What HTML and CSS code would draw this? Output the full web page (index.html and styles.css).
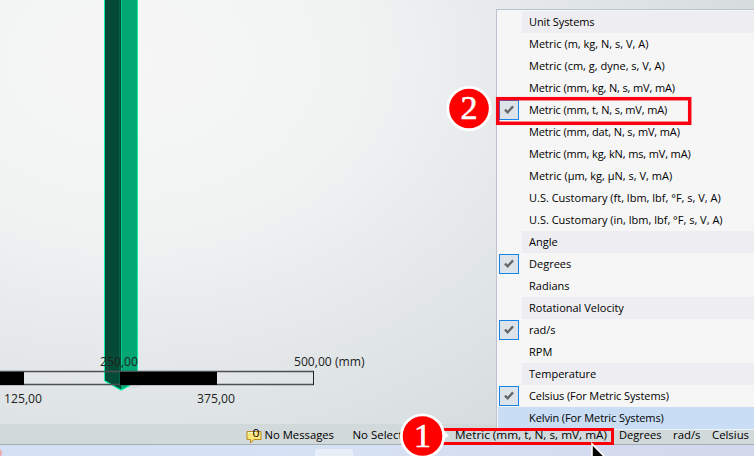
FILE: index.html
```html
<!DOCTYPE html>
<html lang="en">
<head>
<meta charset="utf-8">
<title>Unit selection</title>
<link rel="stylesheet" href="styles.css">
</head>
<body>
<div class="app">
  <main class="viewport">
    <svg class="scene" width="754" height="424" viewBox="0 0 754 424">
      <path d="M105 0H121V390L105 381Z" fill="#044b35"/>
      <path d="M121 0H137V382L121 390Z" fill="#02a672"/>
      <path d="M119.5 0V389" stroke="#066043" stroke-width="1"/>
      <path d="M121.5 0V372" stroke="#04c98c" stroke-width="1"/>
      <path d="M104.5 0V381M137.5 0V372" fill="none" stroke="#14f0aa" stroke-width="1"/>
      <path d="M105 381L121 390L130 385.5" fill="none" stroke="#00f5a6" stroke-width="1.2"/>
      <path d="M131 385H139V388H127Z" fill="#dae0e2"/>
      <path d="M0 371.5H314M0 384.5H314" stroke="#4b5152" stroke-width="1.4"/>
      <path d="M313.5 371V385" stroke="#222" stroke-width="1"/>
      <path d="M0 372H24V385H0ZM120 372H217V385H120Z" fill="#000"/>
      <g class="scale-text">
        <text x="100" y="366" textLength="38" lengthAdjust="spacingAndGlyphs">250,00</text>
        <text x="294" y="366" textLength="70.5" lengthAdjust="spacingAndGlyphs">500,00 (mm)</text>
        <text x="4" y="403" textLength="38" lengthAdjust="spacingAndGlyphs">125,00</text>
        <text x="197" y="403" textLength="38" lengthAdjust="spacingAndGlyphs">375,00</text>
      </g>
    </svg>
  </main>
  <footer class="status">
    <svg width="754" height="20" viewBox="0 0 754 20">
      <path d="M247 7.5H261V15.5H254L250.5 19V15.5H247Z" fill="#ffe779" stroke="#b38a27"/>
      <path d="M248 8.5H256" stroke="#fffbd0"/>
      <g class="status-text">
        <text x="252.5" y="13" textLength="7" lengthAdjust="spacingAndGlyphs">0</text>
        <text x="264.5" y="15" textLength="69.5" lengthAdjust="spacingAndGlyphs">No Messages</text>
        <text x="352.5" y="15" textLength="50" lengthAdjust="spacingAndGlyphs">No Select</text>
        <text x="455" y="15" textLength="152" lengthAdjust="spacingAndGlyphs">Metric (mm, t, N, s, mV, mA)</text>
        <text x="619" y="15" textLength="42.5" lengthAdjust="spacingAndGlyphs">Degrees</text>
        <text x="673" y="15" textLength="27.5" lengthAdjust="spacingAndGlyphs">rad/s</text>
        <text x="712" y="15" textLength="37" lengthAdjust="spacingAndGlyphs">Celsius</text>
      </g>
    </svg>
  </footer>
  <div class="taskbar"><span class="task"></span></div>
</div>

<div class="menu">
  <div class="row heading"><span class="tick"></span><span class="label snug">Unit Systems</span></div>
  <div class="row"><span class="tick"></span><span class="label">Metric (m, kg, N, s, V, A)</span></div>
  <div class="row"><span class="tick"></span><span class="label">Metric (cm, g, dyne, s, V, A)</span></div>
  <div class="row"><span class="tick"></span><span class="label tight">Metric (mm, kg, N, s, mV, mA)</span></div>
  <div class="row"><span class="tick"><svg class="check" viewBox="0 0 20 20"><path d="M5.5 9.5L8.5 12.5L14.5 6"/></svg></span><span class="label tight">Metric (mm, t, N, s, mV, mA)</span></div>
  <div class="row"><span class="tick"></span><span class="label tight">Metric (mm, dat, N, s, mV, mA)</span></div>
  <div class="row"><span class="tick"></span><span class="label tight">Metric (mm, kg, kN, ms, mV, mA)</span></div>
  <div class="row"><span class="tick"></span><span class="label">Metric (µm, kg, µN, s, V, mA)</span></div>
  <div class="row"><span class="tick"></span><span class="label">U.S. Customary (ft, lbm, lbf, °F, s, V, A)</span></div>
  <div class="row"><span class="tick"></span><span class="label">U.S. Customary (in, lbm, lbf, °F, s, V, A)</span></div>
  <div class="row heading"><span class="tick"></span><span class="label">Angle</span></div>
  <div class="row"><span class="tick"><svg class="check" viewBox="0 0 20 20"><path d="M5.5 9.5L8.5 12.5L14.5 6"/></svg></span><span class="label">Degrees</span></div>
  <div class="row"><span class="tick"></span><span class="label">Radians</span></div>
  <div class="row heading"><span class="tick"></span><span class="label">Rotational Velocity</span></div>
  <div class="row"><span class="tick"><svg class="check" viewBox="0 0 20 20"><path d="M5.5 9.5L8.5 12.5L14.5 6"/></svg></span><span class="label">rad/s</span></div>
  <div class="row"><span class="tick"></span><span class="label">RPM</span></div>
  <div class="row heading"><span class="tick"></span><span class="label">Temperature</span></div>
  <div class="row"><span class="tick"><svg class="check" viewBox="0 0 20 20"><path d="M5.5 9.5L8.5 12.5L14.5 6"/></svg></span><span class="label snug">Celsius (For Metric Systems)</span></div>
  <div class="row hover"><span class="tick"></span><span class="label snug">Kelvin (For Metric Systems)</span></div>
</div>

<svg class="callouts" width="754" height="456" viewBox="0 0 754 456">
  <rect x="497.7" y="98.7" width="192" height="24.6" fill="none" stroke="#fb0012" stroke-width="3.5"/>
  <rect x="430" y="429.5" width="182.5" height="14" fill="none" stroke="#fb0009" stroke-width="3"/>
  <path d="M443 430L449 436L443 439Z" fill="#fff"/>
  <circle cx="469" cy="108.5" r="21.2" fill="#fe0000" stroke="#fff" stroke-width="2.8"/>
  <circle cx="422.5" cy="436" r="21.2" fill="#fe0000" stroke="#fff" stroke-width="2.8"/>
  <g class="number"><text x="469" y="119">2</text><text x="422.5" y="447">1</text></g>
  <path d="M592 444V466L609 461Z" fill="#000" stroke="#fff" stroke-width="1.6"/>
  <circle cx="-3" cy="453" r="5" fill="#eba9b0"/>
</svg>
</body>
</html>
```
FILE: styles.css
```css
body {
  margin: 0;
  width: 754px;
  height: 456px;
  overflow: hidden;
  position: relative;
  font-family: "Open Sans", "Noto Sans", sans-serif;
}
svg { display: block; }
.app { display: flex; flex-direction: column; height: 456px; }
.viewport {
  height: 424px;
  background: radial-gradient(ellipse 660px 480px at 130px 60px, #f6f6f6 0%, #f1f3f3 35%, #e3e7e9 65%, #d4dbdd 100%);
}
.scale-text { font-size: 12px; fill: #222; }
.status { height: 20px; background: #d2d9da; border-bottom: 1px solid #a4adb2; }
.status-text { font-size: 11.5px; fill: #000; }
.taskbar {
  flex: 1;
  display: flex;
  padding: 4px 0 0 315px;
  background: linear-gradient(90deg, #d4e0f4, #d7e1f4 50%, #d3d8ec);
}
.task { width: 38px; height: 12px; border-radius: 3px 3px 0 0; background: #e8eef8; }
.menu {
  position: absolute;
  left: 496px;
  top: 9px;
  width: 260px;
  height: 421px;
  padding: 1px 0 0 1px;
  border: 1px solid #bdc2cf;
  border-bottom-color: #eef2f7;
  box-sizing: border-box;
  background: #f6f6f6;
  overflow: hidden;
}
.row { display: flex; align-items: center; height: 22px; }
.tick { width: 24px; height: 22px; flex: none; }
.label {
  flex: 1;
  height: 22px;
  padding-left: 7px;
  font-size: 11px;
  line-height: 22px;
  white-space: nowrap;
  color: #000;
}
.tight { letter-spacing: -0.14px; }
.snug { letter-spacing: -0.1px; }
.heading .label { background: #eeedf2; }
.hover { background: #c9ddf5; }
.check {
  width: 20px;
  height: 20px;
  margin: 1px 0 0 1px;
  box-sizing: border-box;
  border: 1px solid #1683e8;
  background: #dce4ea;
}
.check path { fill: none; stroke: #666; stroke-width: 2.6; }
.callouts { position: absolute; left: 0; top: 0; }
.number {
  font-family: "Liberation Serif", serif;
  font-size: 34px;
  text-anchor: middle;
  fill: #fff;
  stroke: #fff;
  stroke-width: 0.6px;
}
```
